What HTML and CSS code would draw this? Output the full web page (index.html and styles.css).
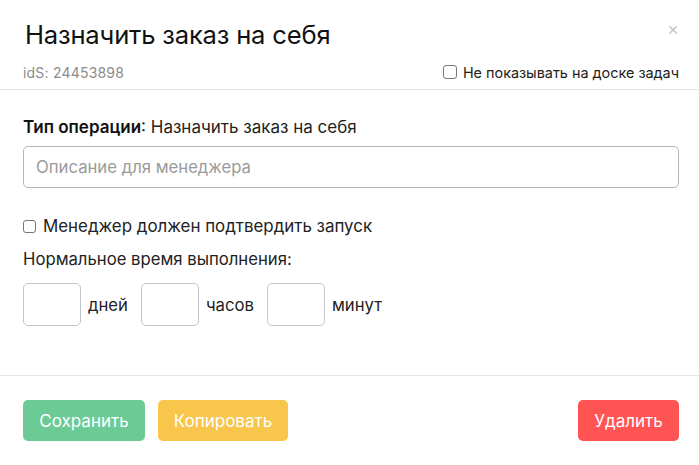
FILE: index.html
```html
<!DOCTYPE html>
<html lang="ru">
<head>
<meta charset="utf-8">
<link rel="stylesheet" href="styles.css">
</head>
<body>
<div class="modal">
  <div class="header">
    <div class="title-row">
      <h1 class="title">Назначить заказ на себя</h1>
      <span class="close">×</span>
    </div>
    <div class="meta-row">
      <span class="ids">idS: 24453898</span>
      <label class="hide-check"><span class="cb"></span>Не показывать на доске задач</label>
    </div>
  </div>
  <div class="body">
    <div class="op"><b>Тип операции</b>: Назначить заказ на себя</div>
    <div class="input-big">Описание для менеджера</div>
    <label class="confirm"><span class="cb cb-lg"></span>Менеджер должен подтвердить запуск</label>
    <div class="norm">Нормальное время выполнения:</div>
    <div class="time-row">
      <span class="box"></span><span class="unit">дней</span>
      <span class="box"></span><span class="unit">часов</span>
      <span class="box"></span><span class="unit">минут</span>
    </div>
  </div>
  <div class="footer">
    <span class="btn btn-green">Сохранить</span>
    <span class="btn btn-yellow">Копировать</span>
    <span class="spacer"></span>
    <span class="btn btn-red">Удалить</span>
  </div>
</div>
</body>
</html>
```
FILE: styles.css
```css
* { box-sizing: border-box; }
html, body { margin: 0; padding: 0; background: #fff; }
body { font-family: Inter, Roboto, "Noto Sans", sans-serif; color: #1e1e1e; width: 699px; height: 465px; overflow: hidden; }
.modal { display: flex; flex-direction: column; height: 465px; }
.header { height: 90px; border-bottom: 1px solid #e6e6e6; padding: 0 20px 0 23px; }
.title-row { display: flex; justify-content: space-between; align-items: flex-start; padding-top: 17px; height: 60px; }
.title { margin: 0 0 0 2px; font-weight: 400; font-size: 25.6px; line-height: 36px; color: #111; letter-spacing: -0.2px; }
.close { color: #c8c8c8; font-size: 18px; line-height: 20px; margin-top: 2px; }
.meta-row { display: flex; justify-content: space-between; align-items: center; height: 24px; }
.ids { color: #8c8c8c; font-size: 14px; letter-spacing: 0.2px; }
.hide-check { display: flex; align-items: center; font-size: 14.4px; color: #222; }
.cb { width: 14px; height: 14px; border: 1px solid #767676; border-radius: 3px; margin-right: 6px; display: inline-block; }
.body { flex: 1; padding: 26px 20px 0 23px; border-bottom: 1px solid #e6e6e6; }
.op { font-size: 17px; line-height: 22px; color: #222; }
.op b { font-weight: 600; color: #111; }
.input-big { margin-top: 8px; height: 42px; border: 1px solid #b5b5bd; border-radius: 5px; padding: 0 12px; display: flex; align-items: center; color: #9a9a9a; font-size: 16.7px; }
.confirm { display: flex; align-items: center; margin-top: 27px; font-size: 16.9px; line-height: 22px; color: #222; }
.cb-lg { width: 13px; height: 13px; margin-right: 7px; }
.norm { margin-top: 11px; font-size: 16.7px; line-height: 22px; color: #222; }
.time-row { display: flex; align-items: center; margin-top: 13px; }
.box { width: 58px; height: 43px; border: 1px solid #c4c4cc; border-radius: 5px; }
.unit { font-size: 16.7px; color: #222; margin: 0 13px 0 7px; }
.footer { height: 89px; display: flex; align-items: center; padding: 0 20px 0 23px; }
.btn { height: 41px; border-radius: 5px; color: #fff; font-size: 17px; display: flex; align-items: center; justify-content: center; padding: 0 16px; }
.btn-green { background: #6ccb95; width: 122px; }
.btn-yellow { background: #f7c64a; width: 130px; margin-left: 13px; }
.btn-red { background: #ff5453; width: 101px; }
.spacer { flex: 1; }
```
